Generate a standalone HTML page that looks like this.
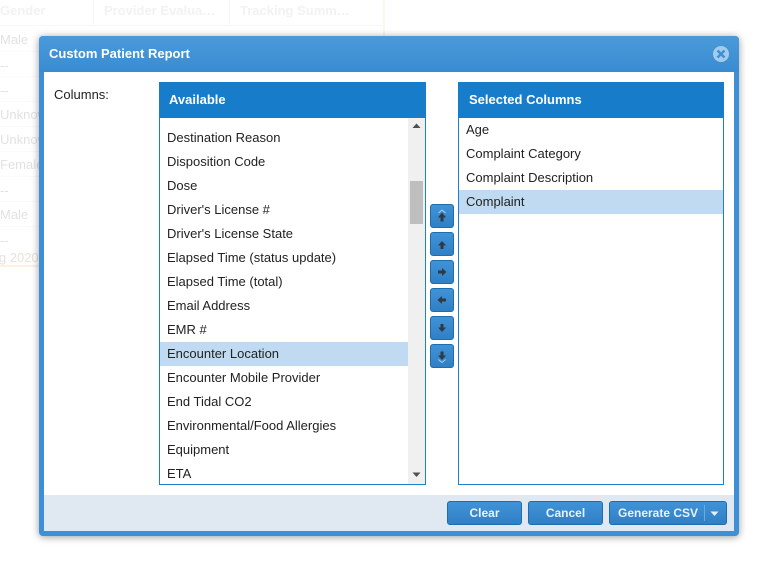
<!DOCTYPE html>
<html><head><meta charset="utf-8"><style>
html,body{margin:0;padding:0;width:775px;height:569px;overflow:hidden;background:#fff;font-family:"Liberation Sans",Arial,sans-serif;font-size:13px;color:#222}
.abs,.abs *{box-sizing:border-box}
.abs{position:absolute}
.bg{color:#e2e2e2;white-space:nowrap;font-size:13px}
.dlg{left:39px;top:36px;width:700px;height:500px;background:#3d90d6;border-radius:4px;box-shadow:0 1px 8px rgba(0,0,0,.4)}
.dh{left:0;top:0;width:700px;height:36px;background:linear-gradient(#4a9ad9,#3a8cd2);border-radius:4px 4px 0 0}
.title{left:10px;top:9px;color:#fff;font-weight:bold;font-size:13px;line-height:18px;white-space:nowrap}
.body{left:5px;top:36px;width:690px;height:459px;background:#fff}
.foot{left:5px;top:459px;width:690px;height:36px;background:#e0e9f2}
.ph{background:#177cca;color:#fff;font-weight:bold;height:36px;line-height:35px;padding-left:10px;font-size:13px}
.lb{border:1px solid #1a80d0;border-top:0;background:#fff;overflow:hidden}
.it{position:absolute;left:0;height:24px;line-height:24px;padding-left:7px;white-space:nowrap;color:#222}
.sel{background:#c0dbf1}
.ab{left:430px;width:24px;height:24px;border:1px solid #1c6eae;border-radius:3px;background:linear-gradient(#4093d8,#317fc4)}
.ab svg{position:absolute;left:0;top:0}
.fb{top:501px;height:24px;border:1px solid #1c6eae;border-radius:3px;background:linear-gradient(#4093d8,#317fc4);color:#e8f2fa;font-weight:bold;font-size:12px;line-height:22px;text-align:center;white-space:nowrap}
</style></head><body>

<div class="abs" style="left:0;top:0;width:385px;height:267px;background:#fff;border-right:2px solid #fef5eb;border-bottom:2px solid #fdf0e2"></div>
<div class="abs" style="left:93px;top:0;width:1px;height:25px;background:#f7f7f7"></div>
<div class="abs" style="left:229px;top:0;width:1px;height:25px;background:#f7f7f7"></div>
<div class="abs" style="left:0;top:25px;width:382px;height:1px;background:#f7f7f7"></div>
<div class="abs" style="left:0;top:51px;width:382px;height:1px;background:#fafafa"></div>
<div class="abs" style="left:0;top:76px;width:382px;height:1px;background:#fafafa"></div>
<div class="abs" style="left:0;top:101px;width:382px;height:1px;background:#fafafa"></div>
<div class="abs" style="left:0;top:126px;width:382px;height:1px;background:#fafafa"></div>
<div class="abs" style="left:0;top:151px;width:382px;height:1px;background:#fafafa"></div>
<div class="abs" style="left:0;top:176px;width:382px;height:1px;background:#fafafa"></div>
<div class="abs" style="left:0;top:201px;width:382px;height:1px;background:#fafafa"></div>
<div class="abs" style="left:0;top:226px;width:382px;height:1px;background:#fafafa"></div>
<div class="abs bg" style="left:0;top:3px;font-weight:bold;color:#f2f2f2">Gender</div>
<div class="abs bg" style="left:104px;top:3px;font-weight:bold;color:#f2f2f2">Provider Evalua…</div>
<div class="abs bg" style="left:240px;top:3px;font-weight:bold;color:#f2f2f2">Tracking Summ…</div>
<div class="abs bg" style="left:0;top:32px">Male</div>
<div class="abs bg" style="left:0;top:58px">--</div>
<div class="abs bg" style="left:0;top:83px">--</div>
<div class="abs bg" style="left:0;top:107px">Unknown</div>
<div class="abs bg" style="left:0;top:132px">Unknown</div>
<div class="abs bg" style="left:0;top:157px">Female</div>
<div class="abs bg" style="left:0;top:183px">--</div>
<div class="abs bg" style="left:0;top:207px">Male</div>
<div class="abs bg" style="left:0;top:233px">--</div>
<div class="abs bg" style="left:-17px;top:250px;color:#e8e2d8">Aug 2020</div>

<div class="abs dlg">
  <div class="abs dh"></div>
  <div class="abs title">Custom Patient Report</div>
  <svg class="abs" style="left:673px;top:9px" width="18" height="18" viewBox="0 0 18 18"><circle cx="9" cy="9" r="8" fill="#a3cbec"/><path d="M5.5 5.5L12.5 12.5M12.5 5.5L5.5 12.5" stroke="#3d90d6" stroke-width="2.4"/></svg>
  <div class="abs body"></div>
  <div class="abs foot"></div>
</div>

<div class="abs" style="left:54px;top:86px;line-height:18px">Columns:</div>

<div class="abs ph" style="left:159px;top:82px;width:267px">Available</div>
<div class="abs lb" style="left:159px;top:118px;width:267px;height:367px">
  <div class="it" style="top:8px;width:249px">Destination Reason</div>
  <div class="it" style="top:32px;width:249px">Disposition Code</div>
  <div class="it" style="top:56px;width:249px">Dose</div>
  <div class="it" style="top:80px;width:249px">Driver's License #</div>
  <div class="it" style="top:104px;width:249px">Driver's License State</div>
  <div class="it" style="top:128px;width:249px">Elapsed Time (status update)</div>
  <div class="it" style="top:152px;width:249px">Elapsed Time (total)</div>
  <div class="it" style="top:176px;width:249px">Email Address</div>
  <div class="it" style="top:200px;width:249px">EMR #</div>
  <div class="it sel" style="top:224px;width:248px">Encounter Location</div>
  <div class="it" style="top:248px;width:249px">Encounter Mobile Provider</div>
  <div class="it" style="top:272px;width:249px">End Tidal CO2</div>
  <div class="it" style="top:296px;width:249px">Environmental/Food Allergies</div>
  <div class="it" style="top:320px;width:249px">Equipment</div>
  <div class="it" style="top:344px;width:249px">ETA</div>
  <div class="abs" style="left:248px;top:0;width:17px;height:366px;background:#f0f0f0"></div>
  <div class="abs" style="left:250px;top:63px;width:13px;height:43px;background:#bebebe"></div>
  <svg class="abs" style="left:252px;top:5px" width="9" height="6"><path d="M4.5 0.5L8.5 5H0.5Z" fill="#505050"/></svg>
  <svg class="abs" style="left:252px;top:354px" width="9" height="6"><path d="M0.5 0.5H8.5L4.5 5Z" fill="#505050"/></svg>
</div>

<div class="abs ph" style="left:458px;top:82px;width:266px;padding-left:11px">Selected Columns</div>
<div class="abs lb" style="left:458px;top:118px;width:266px;height:367px">
  <div class="it" style="top:0;width:264px">Age</div>
  <div class="it" style="top:24px;width:264px">Complaint Category</div>
  <div class="it" style="top:48px;width:264px">Complaint Description</div>
  <div class="it sel" style="top:72px;width:264px">Complaint</div>
</div>

<div class="abs ab" style="top:204px"><svg width="22" height="22"><path d="M7.5 8L11 5L14.5 8" fill="none" stroke="#a9cfee" stroke-width="1"/><path d="M11 7.5L15 12.5H12.5V16.5H9.5V12.5H7Z" fill="#2f3a45"/></svg></div>
<div class="abs ab" style="top:232px"><svg width="22" height="22"><path d="M11 8L15 12.5H12.5V16H9.5V12.5H7Z" fill="#2f3a45"/></svg></div>
<div class="abs ab" style="top:260px"><svg width="22" height="22"><path d="M15.5 11L11 15V12.5H7V9.5H11V7Z" fill="#2f3a45"/></svg></div>
<div class="abs ab" style="top:288px"><svg width="22" height="22"><path d="M6.5 11L11 7V9.5H15V12.5H11V15Z" fill="#2f3a45"/></svg></div>
<div class="abs ab" style="top:316px"><svg width="22" height="22"><path d="M11 15L7 10.5H9.5V7H12.5V10.5H15Z" fill="#2f3a45"/></svg></div>
<div class="abs ab" style="top:344px"><svg width="22" height="22"><path d="M7.5 14.5L11 17.5L14.5 14.5" fill="none" stroke="#a9cfee" stroke-width="1"/><path d="M11 15L7 10.5H9.5V6.5H12.5V10.5H15Z" fill="#2f3a45"/></svg></div>

<div class="abs fb" style="left:447px;width:75px">Clear</div>
<div class="abs fb" style="left:528px;width:75px">Cancel</div>
<div class="abs fb" style="left:609px;width:118px;text-align:left;padding-left:8px">Generate CSV
  <div class="abs" style="left:94px;top:3px;width:1px;height:16px;background:#6fa9da"></div>
  <svg class="abs" style="left:100px;top:9px" width="9" height="6"><path d="M0.5 0.5H8.5L4.5 5Z" fill="#e8f2fa"/></svg>
</div>
</body></html>
